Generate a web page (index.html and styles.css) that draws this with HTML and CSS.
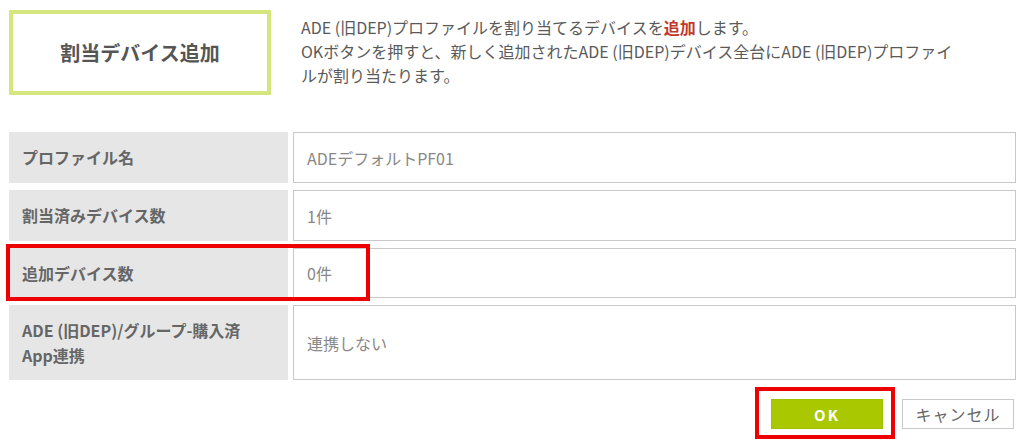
FILE: index.html
```html
<!DOCTYPE html>
<html lang="ja">
<head>
<meta charset="utf-8">
<title>割当デバイス追加</title>
<link rel="stylesheet" href="styles.css">
</head>
<body>
<div class="page">
  <div class="header">
    <div class="title-box">割当デバイス追加</div>
    <p class="desc">ADE (旧DEP)プロファイルを割り当てるデバイスを<strong class="em">追加</strong>します。<br>OKボタンを押すと、新しく追加されたADE (旧DEP)デバイス全台にADE (旧DEP)プロファイ<br>ルが割り当たります。</p>
  </div>
  <div class="table">
    <div class="label">プロファイル名</div>
    <div class="value">ADEデフォルトPF01</div>
    <div class="label">割当済みデバイス数</div>
    <div class="value">1件</div>
    <div class="label">追加デバイス数</div>
    <div class="value">0件</div>
    <div class="label">ADE (旧DEP)/グループ-購入済<br>App連携</div>
    <div class="value">連携しない</div>
    <span class="mark mark-row"></span>
  </div>
  <div class="actions">
    <div class="ok-wrap">
      <button class="btn btn-ok">OK</button>
      <span class="mark mark-ok"></span>
    </div>
    <button class="btn btn-cancel">キャンセル</button>
  </div>
</div>
</body>
</html>
```

FILE: styles.css
```css
* { box-sizing: border-box; }
html, body {
  height: 441px;
}
body {
  margin: 0;
  background: #fff;
  font-family: "Noto Sans CJK JP", "Noto Sans", sans-serif;
  color: #555;
}
.page {
  padding: 10px 8px 0 9px;
}
.header {
  display: flex;
  gap: 30px;
  align-items: flex-start;
}
.title-box {
  width: 262px;
  height: 85px;
  border: 4px solid #d6e67e;
  display: flex;
  align-items: center;
  justify-content: center;
  font-size: 20px;
  font-weight: bold;
  color: #555;
  flex-shrink: 0;
}
.desc {
  margin: 5px 0 0;
  font-size: 16px;
  line-height: 24px;
  color: #5a5a5a;
  white-space: nowrap;
}
.em {
  color: #c0392b;
  font-weight: bold;
}
.table {
  position: relative;
  margin-top: 37px;
  display: grid;
  grid-template-columns: 279px 1fr;
  grid-template-rows: 51px 51px 50px 75px;
  column-gap: 5px;
  row-gap: 7px;
}
.label {
  background: #e6e6e6;
  display: flex;
  align-items: center;
  padding-left: 13px;
  font-size: 16px;
  font-weight: bold;
  color: #666;
  line-height: 25px;
}
.value {
  border: 1px solid #c8c8c8;
  display: flex;
  align-items: center;
  padding-left: 13px;
  font-size: 16px;
  color: #888;
}
.mark {
  position: absolute;
  border: 4px solid #ee0000;
  pointer-events: none;
}
.mark-row {
  left: -3px;
  top: 112px;
  width: 364px;
  height: 57px;
}
.actions {
  display: flex;
  justify-content: flex-end;
  gap: 19px;
  margin-top: 19px;
  padding-right: 2px;
}
.ok-wrap {
  position: relative;
}
.btn {
  width: 112px;
  height: 30px;
  font-family: inherit;
  font-size: 15px;
  cursor: pointer;
}
.btn-ok {
  background: #a9c800;
  border: 1px solid #a0bf00;
  color: #fff;
  font-weight: bold;
  letter-spacing: 2px;
}
.btn-cancel {
  background: #fff;
  border: 1px solid #c8c8c8;
  color: #666;
  font-size: 16px;
  letter-spacing: 1px;
}
.mark-ok {
  left: -16px;
  top: -12px;
  width: 140px;
  height: 52px;
}
```
